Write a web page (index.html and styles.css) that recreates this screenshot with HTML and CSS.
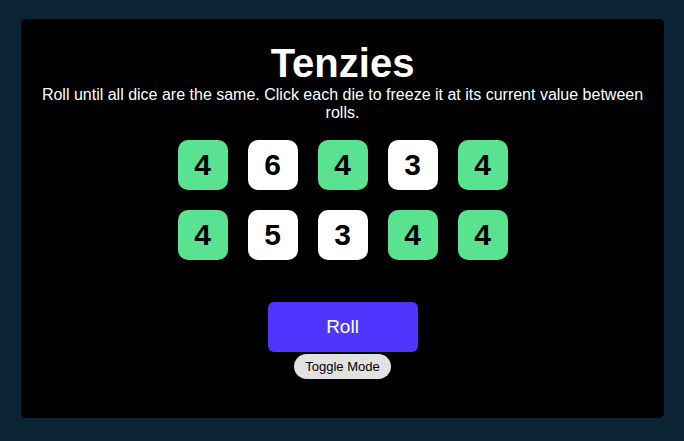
FILE: index.html
```html
<!DOCTYPE html>
<html>
<head>
<meta charset="utf-8">
<link rel="stylesheet" href="styles.css">
</head>
<body>
<main class="board">
  <h1 class="title">Tenzies</h1>
  <p class="instructions">Roll until all dice are the same. Click each die to freeze it at its current value between rolls.</p>
  <div class="dice">
    <button class="die held">4</button>
    <button class="die">6</button>
    <button class="die held">4</button>
    <button class="die">3</button>
    <button class="die held">4</button>
    <button class="die held">4</button>
    <button class="die">5</button>
    <button class="die">3</button>
    <button class="die held">4</button>
    <button class="die held">4</button>
  </div>
  <button class="roll">Roll</button>
  <button class="toggle">Toggle Mode</button>
</main>
</body>
</html>
```
FILE: styles.css
```css
html, body {
  margin: 0;
  padding: 0;
  height: 100%;
}
body {
  background: #0b2434;
  font-family: "Liberation Sans", Arial, sans-serif;
  padding: 19px 20px 23px 21px;
  box-sizing: border-box;
}
.board {
  background: #000;
  border-radius: 5px;
  height: 399px;
  display: flex;
  flex-direction: column;
  align-items: center;
  padding: 0 20px;
  box-sizing: border-box;
  color: #fff;
}
.title {
  margin: 22px 0 0;
  font-size: 40px;
  line-height: 44px;
  font-weight: 700;
}
.instructions {
  margin: 1px 0 0;
  font-size: 16px;
  line-height: 18px;
  text-align: center;
}
.dice {
  display: grid;
  grid-template-columns: repeat(5, 50px);
  grid-auto-rows: 50px;
  gap: 20px;
  margin-top: 18px;
}
.die {
  border: none;
  border-radius: 10px;
  background: #fff;
  color: #000;
  font-family: "Liberation Sans", Arial, sans-serif;
  font-weight: 700;
  font-size: 30px;
  padding: 0;
}
.die.held {
  background: #59e391;
}
.roll {
  margin-top: 42px;
  width: 150px;
  height: 50px;
  border: none;
  border-radius: 6px;
  background: #5035ff;
  color: #fff;
  font-family: "Liberation Sans", Arial, sans-serif;
  font-size: 19px;
}
.toggle {
  margin-top: 2px;
  height: 25px;
  padding: 0 11px;
  border: none;
  border-radius: 13px;
  background: #e1e1e1;
  color: #000;
  font-family: "Liberation Sans", Arial, sans-serif;
  font-size: 13px;
}
```
